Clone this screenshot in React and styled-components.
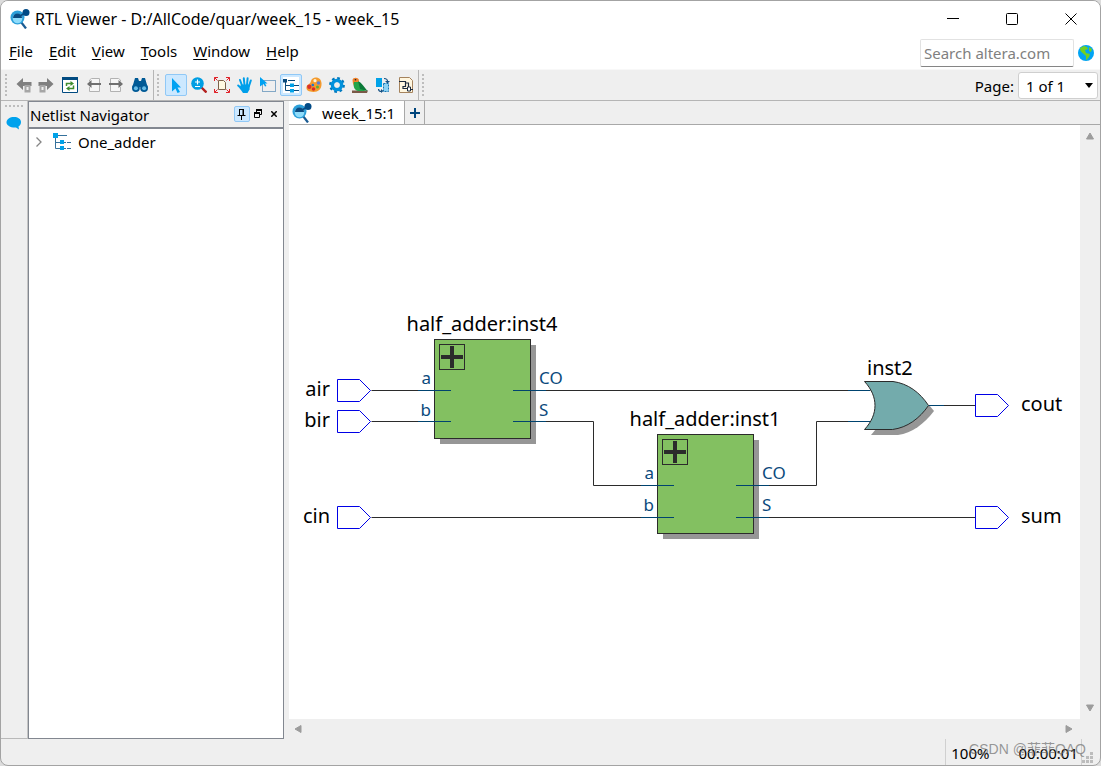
import styled, { createGlobalStyle } from "styled-components";

const GlobalStyle = createGlobalStyle`
  * {
    box-sizing: border-box;
  }

  body {
    margin: 0;
    background: #dcdcdc;
    color: #000;
    font-family: "Noto Sans", "Noto Sans CJK SC", sans-serif;
    font-size: 15px;
    line-height: 20px;
  }

  button, input, select {
    font: inherit;
    color: inherit;
  }
`;

const Magnifier = () => (
  <svg width="20" height="20" viewBox="0 0 20 20">
    <path d="M11 13l5 6.5" stroke="#1b5c93" strokeWidth="2.2" />
    <circle cx="7.5" cy="8.5" r="7" fill="#2c9fd9" />
    <circle cx="7.5" cy="9.5" r="4.8" fill="#8fdcfb" />
    <path d="M3 9a4.5 4.5 0 0 1 9 0z" fill="#0b4a80" />
    <path d="M10 7l5-3" stroke="#0b4a80" strokeWidth="1.5" />
    <circle cx="16" cy="3.5" r="3.5" fill="#004a86" />
  </svg>
);

const Arrow = ({ flip }) => (
  <svg width="16" height="16" viewBox="0 0 16 16">
    <g transform={flip ? "matrix(-1 0 0 1 16 0)" : undefined}>
      <path d="M0.5 7L7 1v4h8.5v4H7v4z" fill="#7f7f7f" />
      <path d="M8.5 8h6v7.500h-6z" fill="#a6a6a6" />
      <path d="M10.500 10h2v3h-2z" fill="#efefef" />
    </g>
  </svg>
);

const PageArrow = ({ flip }) => (
  <svg width="16" height="16" viewBox="0 0 16 16">
    <g transform={flip ? "matrix(-1 0 0 1 16 0)" : undefined}>
      <path d="M3.5 4.500V3l2-1.500h8v13h-10V10" fill="#f6f6f6" stroke="#b2b2b2" />
      <path d="M1 7L5.500 3v3H15v2H5.500v3z" fill="#707070" />
    </g>
  </svg>
);

const Refresh = () => (
  <svg width="16" height="16" viewBox="0 0 16 16">
    <path d="M0.5 0.5h15v15H0.5z" fill="#fff" stroke="#004a80" />
    <path d="M0 0h16v3H0z" fill="#004a80" />
    <path d="M4.5 9V6.5H9M11.5 8.500v3H7" fill="none" stroke="#3f8d2f" strokeWidth="1.5" />
    <path d="M8.5 4l3.500 2.500L8.5 9zM7.5 9L4 11.500 7.5 14z" fill="#3f8d2f" />
  </svg>
);

const Binoculars = () => (
  <svg width="16" height="16" viewBox="0 0 16 16">
    <path d="M3 1h3l1 3h2l1-3h3l2.600 9H.4z" fill="#005a96" />
    <circle cx="3.9" cy="11" r="3.9" fill="#005a96" />
    <circle cx="12.1" cy="11" r="3.9" fill="#005a96" />
    <circle cx="3.9" cy="11.2" r="2" fill="#67bde8" />
    <circle cx="12.1" cy="11.2" r="2" fill="#67bde8" />
  </svg>
);

const Pointer = () => (
  <svg width="16" height="16" viewBox="0 0 16 16">
    <path d="M4 1l9 9.500H9.500L12 15l-2.500 1L7.500 11.500 4 14.500z" fill="#00a2f2" />
  </svg>
);

const Zoom = () => (
  <svg width="16" height="16" viewBox="0 0 16 16">
    <path d="M10 10l5.500 5.500" stroke="#b3211f" strokeWidth="2.4" />
    <circle cx="6.5" cy="6.5" r="6.3" fill="#009ee3" />
    <path d="M6.5 2.5v5M4 5h5M4 9.5h5" stroke="#fff" strokeWidth="1.2" />
  </svg>
);

const FitPage = () => (
  <svg width="16" height="16" viewBox="0 0 16 16">
    <path d="M4.500 3.500h5l2 2v7h-7z" fill="#fff8e2" stroke="#7b604a" />
    <path
      d="M.5 4V.5H4M12 .5h3.500V4M.5 12v3.500H4M12 15.500h3.500V12M.5.5l3 3M15.500.5l-3 3M.5 15.500l3-3M15.500 15.500l-3-3"
      fill="none"
      stroke="#e02229"
    />
  </svg>
);

const Hand = () => (
  <svg width="16" height="16" viewBox="0 0 16 16">
    <path
      d="M5.200 9L3 3M7.500 8L6.800 1.300M10 8l.6-6.700M12 9l1.800-5.500M5 12L1.200 8.500"
      stroke="#009fea"
      strokeWidth="2"
      strokeLinecap="round"
    />
    <path d="M4 7.500h9l-.5 5-2 3.500H6l-3.500-5z" fill="#009fea" />
  </svg>
);

const AreaSelect = () => (
  <svg width="16" height="16" viewBox="0 0 16 16">
    <path d="M2.5 3.5h13v11h-13z" fill="none" stroke="#17609d" strokeDasharray="1 1" />
    <path d="M0 0l7.500 6.500H5L6.500 9 5 9.500 3.500 7 0 9.500z" fill="#00a2f2" />
  </svg>
);

const Tree = ({ size = 18 }) => (
  <svg width={size} height={size} viewBox="0 0 18 18">
    <path d="M2.5 3v12.500H8M3 9.5h5M5 2.5h9M11 9.5h2M14 9.5h4M11 15.500h2M14 15.500h4" fill="none" stroke="#35719c" />
    <path d="M0 0h5v5H0zM7 7h4v4H7zM7 13h4v4H7z" fill="#00a2e8" />
  </svg>
);

const NetlistTree = () => (
  <svg width="18" height="18" viewBox="0 0 18 18">
    <path d="M1 1h16v16H1z" fill="#fff" />
    <path d="M3.5 4v10.500H8M4 9.5h4M6 4.500h7M11 9.5h6M11 14.500h6" fill="none" stroke="#0b4a7c" />
    <path d="M1 3h4v3.500H1z" fill="#0b4a7c" />
    <path d="M8 7.500h4V11H8zM8 13h4v3.500H8z" fill="#00a2e8" />
  </svg>
);

const Palette = () => (
  <svg width="16" height="16" viewBox="0 0 16 16">
    <path d="M5 4c1-5 10-5 10.500 2 .5 6-3 9-8 9C2 15 0 13 .5 10 1 7 4 8 5 4z" fill="#f49a2c" />
    <circle cx="9" cy="3.700" r="1.600" fill="#fff3d8" />
    <circle cx="12.500" cy="6" r="1.700" fill="#5a7fd6" />
    <circle cx="11.500" cy="10" r="1.500" fill="#5cae3b" />
    <circle cx="7.500" cy="12" r="1.800" fill="#d92b2b" />
    <circle cx="3.300" cy="9.700" r="2.200" fill="#d9302b" />
    <circle cx="6.800" cy="8" r="1.300" fill="#1b77cf" />
  </svg>
);

const Gear = () => (
  <svg width="16" height="16" viewBox="0 0 16 16">
    <circle cx="8" cy="8" r="6.6" fill="none" stroke="#0078bd" strokeWidth="2.6" strokeDasharray="2.6 2.584" />
    <circle cx="8" cy="8" r="4.5" fill="none" stroke="#0091dc" strokeWidth="3.6" />
    <circle cx="8" cy="8" r="2.6" fill="#efefef" />
  </svg>
);

const Bird = () => (
  <svg width="16" height="16" viewBox="0 0 16 16">
    <path d="M0 13.500h16l-1 2.500H0z" fill="#7a5a48" />
    <path d="M.5 3C1 0 6 0 7 3l-1 4-4 2C1 7 .5 5 .5 3z" fill="#f0822b" />
    <path d="M2 5c-1 4 0 8 4 9h7L7.500 5z" fill="#22a54a" />
    <path d="M6 4c4 2 6 6 9.500 10L8 12z" fill="#0b7a38" />
    <circle cx="3.500" cy="2.700" r=".8" fill="#123" />
  </svg>
);

const Swap = () => (
  <svg width="16" height="16" viewBox="0 0 16 16">
    <path d="M1 1h6v9H1z" fill="#00a2e8" />
    <path d="M8.500 6.500h5v8h-5z" fill="#8cd2f4" stroke="#1377b5" strokeDasharray="2 1" />
    <path d="M9 1.500c2.500 0 3.500 1 3.500 3M3.500 12c0 1.500 1 2.500 3 2.500" fill="none" stroke="#155184" strokeWidth="1.2" />
    <path d="M10 4h5l-2.500 2.500zM6 12l2.500 2L6 16z" fill="#155184" />
  </svg>
);

const Netlist = () => (
  <svg width="16" height="16" viewBox="0 0 16 16">
    <path d="M1.5.5h10l3 3v12h-13z" fill="#fff6df" stroke="#a5835d" />
    <path d="M1 4.500h6.500v5H5v2h5M7.500 6h3v6M12 12.500h3" fill="none" stroke="#1c2a3c" strokeWidth="1.2" />
    <path d="M9.500 10h3v4h-3z" fill="#fff" stroke="#1c2a3c" />
  </svg>
);

const Globe = () => (
  <svg width="16" height="16" viewBox="0 0 16 16">
    <circle cx="8" cy="8" r="8" fill="#00a4f4" />
    <path d="M2 3l4-2 3 1 1 2-3 1 1 3 4 1-1 3-3 3.500L8 11 4.500 8l-2-2z" fill="#72cf22" />
    <path d="M11 2l3 2-1 3-2-1z" fill="#72cf22" />
  </svg>
);

const Pin = () => (
  <svg width="10" height="12" viewBox="0 0 10 12">
    <path d="M2.5 1v6M2 1.5h4M.5 7.5h8M4.5 8v4" fill="none" stroke="#000" />
    <path d="M5.500 1h1.500v6H5.500z" />
  </svg>
);

const Restore = () => (
  <svg width="10" height="10" viewBox="0 0 10 10">
    <path d="M3.5 3V1.5h5v4H7M1.5 4.5h5v4h-5z" fill="none" stroke="#000" />
    <path d="M3 0h6v2H3zM1 3h6v2H1z" />
  </svg>
);

const Cross = ({ size, weight }) => (
  <svg width={size} height={size} viewBox="0 0 12 12">
    <path d="M0.5 0.5l11 11M11.5 0.5l-11 11" stroke="#000" strokeWidth={weight} />
  </svg>
);

const Triangle = ({ turn = 0 }) => (
  <svg width="10" height="10" viewBox="0 0 10 10">
    <path d="M5 2l3.500 6h-7z" fill="#9c9c9c" stroke="#9c9c9c" strokeLinejoin="round" transform={`rotate(${turn} 5 5)`} />
  </svg>
);

const MENUS = ["File", "Edit", "View", "Tools", "Window", "Help"];

const FILE_TOOLS = [
  { label: "Back", icon: <Arrow /> },
  { label: "Forward", icon: <Arrow flip /> },
  { label: "Refresh", icon: <Refresh />, wide: true },
  { label: "Previous page", icon: <PageArrow /> },
  { label: "Next page", icon: <PageArrow flip /> },
  { label: "Find", icon: <Binoculars />, wide: true },
];

const VIEW_TOOLS = [
  { label: "Selection tool", icon: <Pointer />, active: true },
  { label: "Zoom tool", icon: <Zoom /> },
  { label: "Fit in window", icon: <FitPage /> },
  { label: "Hand tool", icon: <Hand /> },
  { label: "Area selection", icon: <AreaSelect /> },
  { label: "Netlist navigator", icon: <NetlistTree />, active: true },
  { label: "Color settings", icon: <Palette /> },
  { label: "Options", icon: <Gear /> },
  { label: "Bird's eye view", icon: <Bird /> },
  { label: "Swap view", icon: <Swap /> },
  { label: "Export netlist", icon: <Netlist /> },
];

const PINS = [
  { name: "air", x: 48, y: 265, input: true },
  { name: "bir", x: 48, y: 296, input: true },
  { name: "cin", x: 48, y: 392, input: true },
  { name: "cout", x: 686, y: 280 },
  { name: "sum", x: 686, y: 392 },
];

const BLOCKS = [
  { name: "half_adder:inst4", x: 145, y: 214, ports: [51, 82] },
  { name: "half_adder:inst1", x: 368, y: 309, ports: [51, 83] },
];

const WIRES = [
  "M82 265H145",
  "M82 296H145",
  "M82 392H368",
  "M242 265H581",
  "M242 296H304V360H368",
  "M465 360H527V296H581",
  "M465 392H686",
  "M639 280H686",
];

const Block = ({ name, x, y, ports }) => (
  <g transform={`translate(${x} ${y})`}>
    <InstanceName x="48" y="-8" textAnchor="middle">{name}</InstanceName>
    <rect x="6" y="6" width="96" height="99" fill="#969696" />
    <rect x="0.5" y="0.5" width="96" height="99" fill="#83c061" stroke="#2b2b2b" />
    <rect x="5.5" y="5.5" width="25" height="25" fill="none" stroke="#2b2b2b" />
    <path d="M18 7v22M7 18h22" stroke="#2b2b2b" strokeWidth="4" />
    {ports.map((py, i) => (
      <g key={py}>
        <path d={`M-16 ${py}.5H17M79 ${py}.5H112`} stroke="#00436f" />
        <PortName x="-3" y={45 + i * 32} textAnchor="end">{i ? "b" : "a"}</PortName>
        <PortName x="105" y={45 + i * 32}>{i ? "S" : "CO"}</PortName>
      </g>
    ))}
  </g>
);

const Schematic = () => (
  <Drawing width="791" height="594" viewBox="0 0 791 594" role="img" aria-label="One_adder schematic">
    <g transform="translate(0.5 0.5)" fill="none" stroke="#2b2b2b">
      {WIRES.map((d) => <path key={d} d={d} />)}
    </g>
    {BLOCKS.map((block) => <Block key={block.name} {...block} />)}
    <path d="M587 304l-5 6h27c14-2 26-11 36-24l-5-6z" fill="#969696" />
    <path d="M575.5 256.5H604c15 2 27 11 35.500 24-9 13-21 22-36 24h-28c14-15 14-33 0-48z" fill="#73abac" stroke="#2b2b2b" />
    <path d="M559 265.5h22M559 296.5h22M640 280.5h15" stroke="#00436f" />
    <InstanceName x="578" y="250">inst2</InstanceName>
    {PINS.map(({ name, x, y, input }) => (
      <g key={name}>
        <path d={`M${x}.5 ${y - 10.5}h22l11 11-11 11h-22z`} fill="#fff" stroke="#0000e6" />
        <InstanceName x={input ? x - 7 : x + 46} y={y + 6} textAnchor={input ? "end" : "start"}>
          {name}
        </InstanceName>
      </g>
    ))}
  </Drawing>
);

const App = () => {
  return (
    <Window>
      <GlobalStyle />
      <TitleBar>
        <Magnifier />
        <Title>RTL Viewer - D:/AllCode/quar/week_15 - week_15</Title>
        <CaptionButton aria-label="Minimize">
          <svg width="12" height="12"><path d="M0 5.5h12" stroke="#000" /></svg>
        </CaptionButton>
        <CaptionButton aria-label="Maximize">
          <svg width="12" height="12"><rect x=".5" y=".5" width="11" height="11" rx="1" fill="none" stroke="#000" /></svg>
        </CaptionButton>
        <CaptionButton aria-label="Close"><Cross size={12} weight={1} /></CaptionButton>
      </TitleBar>
      <MenuBar>
        <Menus>
          {MENUS.map((menu) => (
            <MenuButton key={menu}><u>{menu[0]}</u>{menu.slice(1)}</MenuButton>
          ))}
        </Menus>
        <SearchInput type="search" placeholder="Search altera.com" aria-label="Search altera.com" />
        <PlainButton aria-label="Open altera.com"><Globe /></PlainButton>
      </MenuBar>
      <ToolBar>
        <Grip />
        <ToolGroup>
          {FILE_TOOLS.map(({ label, icon, wide }) => (
            <ToolButton key={label} aria-label={label} $width={wide ? 25 : 21}>{icon}</ToolButton>
          ))}
        </ToolGroup>
        <Divider />
        <Grip />
        <ToolGroup>
          {VIEW_TOOLS.map(({ label, icon, active }) => (
            <ToolButton key={label} aria-label={label} $width={22} $active={active}>{icon}</ToolButton>
          ))}
        </ToolGroup>
        <Divider />
        <Grip />
        <PageLabel htmlFor="page">Page:</PageLabel>
        <SelectBox>
          <PageSelect id="page"><option>1 of 1</option></PageSelect>
          <svg width="8" height="5"><path d="M0 0h8L4 5z" /></svg>
        </SelectBox>
      </ToolBar>
      <Body>
        <SideStrip>
          <StripGrip />
          <PlainButton aria-label="Messages">
            <svg width="16" height="14" viewBox="0 0 16 14">
              <path d="M8 1c4 0 7 2 7 5 0 2-1 3.500-2.500 4.500l.5 3-3-2C5 12 .5 9.500.5 6.500.5 3 4 1 8 1z" fill="#00a2ed" />
            </svg>
          </PlainButton>
        </SideStrip>
        <Navigator>
          <NavigatorHeader>
            <NavigatorTitle>Netlist Navigator</NavigatorTitle>
            <DockButton aria-label="Pin" $active><Pin /></DockButton>
            <DockButton aria-label="Float"><Restore /></DockButton>
            <DockButton aria-label="Close panel"><Cross size={6} weight={3} /></DockButton>
          </NavigatorHeader>
          <TreeRow>
            <svg width="8" height="12"><path d="M1.5 1.5L6 6l-4.500 4.500" fill="none" stroke="#858585" strokeWidth="1.3" /></svg>
            <Tree />
            <span>One_adder</span>
          </TreeRow>
        </Navigator>
        <Viewer>
          <Tabs>
            <Tab><Magnifier />week_15:1</Tab>
            <NewTab aria-label="New tab">
              <svg width="10" height="10"><path d="M5 0v10M0 5h10" stroke="#00457c" strokeWidth="2" /></svg>
            </NewTab>
          </Tabs>
          <Stage>
            <Canvas><Schematic /></Canvas>
            <ScrollTrack $vertical><Triangle /><Triangle turn={180} /></ScrollTrack>
            <ScrollTrack><Triangle turn={270} /><Triangle turn={90} /></ScrollTrack>
          </Stage>
        </Viewer>
      </Body>
      <StatusBar>
        <Status>100%</Status>
        <Status>00:00:01</Status>
        <SizeGrip width="12" height="12" viewBox="0 0 12 12">
          <path d="M8 0h3v3H8zM4 4h3v3H4zM8 4h3v3H8zM0 8h3v3H0zM4 8h3v3H4zM8 8h3v3H8z" fill="#bcbcbc" />
        </SizeGrip>
        <Watermark>CSDN @菲菲QAQ</Watermark>
      </StatusBar>
    </Window>
  );
};

const Window = styled.div`
  display: flex;
  flex-direction: column;
  min-height: 100vh;
  border: 1px solid #a3a3a3;
  border-radius: 8px;
  background: #efefef;
  overflow: hidden;
`;

const PlainButton = styled.button`
  display: flex;
  align-items: center;
  justify-content: center;
  padding: 0;
  border: 0;
  background: none;
`;

const TitleBar = styled.header`
  display: flex;
  align-items: center;
  height: 36px;
  padding-left: 9px;
  background: #fff;
`;

const Title = styled.h1`
  flex: 1;
  margin: 0;
  padding-left: 5px;
  font-size: 16px;
  font-weight: 400;
`;

const CaptionButton = styled(PlainButton)`
  width: 59px;
  height: 36px;
`;

const MenuBar = styled.div`
  display: flex;
  align-items: center;
  gap: 4px;
  height: 32px;
  padding-right: 6px;
  background: #fff;
`;

const Menus = styled.nav`
  display: flex;
  flex: 1;
  align-self: flex-start;
`;

const MenuButton = styled(PlainButton)`
  display: block;
  height: 28px;
  padding: 0 8px;

  u {
    text-underline-offset: 2px;
  }
`;

const SearchInput = styled.input`
  width: 154px;
  height: 28px;
  padding: 0 3px;
  border: 1px solid #e2e2e2;
  border-bottom-color: #858585;
  border-radius: 2px;
  background: #fff;

  &::placeholder {
    color: #808080;
    opacity: 1;
  }
`;

const ToolBar = styled.div`
  display: flex;
  align-items: center;
  height: 32px;
  padding: 0 2px 0 4px;
  border-top: 1px solid #f8f8f8;
  border-bottom: 1px solid #b5b5b5;
`;

const Grip = styled.span`
  width: 2px;
  height: 22px;
  background: repeating-linear-gradient(#bdbdbd 0 2px, transparent 2px 4px);
`;

const ToolGroup = styled.div`
  display: flex;
  gap: 1px;
  padding: 0 1px 0 6px;
`;

const ToolButton = styled(PlainButton)`
  width: ${({ $width }) => $width}px;
  height: 22px;
  border: 1px solid ${({ $active }) => ($active ? "#90c8f6" : "transparent")};
  border-radius: 2px;
  background: ${({ $active }) => ($active ? "#cce8ff" : "transparent")};

  svg {
    flex-shrink: 0;
  }
`;

const Divider = styled.span`
  width: 1px;
  height: 30px;
  margin-right: 3px;
  background: #b5b5b5;
`;

const PageLabel = styled.label`
  margin-left: auto;
  padding: 2px 4px 0 0;
`;

const SelectBox = styled.div`
  display: grid;
  align-items: center;
  width: 80px;

  > * {
    grid-area: 1 / 1;
  }

  svg {
    justify-self: end;
    margin-right: 5px;
    pointer-events: none;
  }
`;

const PageSelect = styled.select`
  width: 100%;
  height: 27px;
  padding: 2px 7px 0;
  appearance: none;
  border: 1px solid #cfcfcf;
  border-radius: 3px;
  background: #fff;
`;

const Body = styled.main`
  display: flex;
  flex: 1;
`;

const SideStrip = styled.aside`
  display: flex;
  flex-direction: column;
  align-items: center;
  gap: 9px;
  width: 27px;
  padding-top: 4px;
  border-right: 1px solid #c4c4c4;
  border-bottom: 1px solid #b9b9b9;
`;

const StripGrip = styled.span`
  width: 18px;
  height: 2px;
  background: repeating-linear-gradient(90deg, #bdbdbd 0 2px, transparent 2px 4px);
`;

const Navigator = styled.section`
  width: 256px;
  margin-right: 5px;
  border: 1px solid #828790;
  background: #fff;
`;

const NavigatorHeader = styled.div`
  display: flex;
  align-items: center;
  height: 27px;
  padding: 0 1px 2px;
  border-bottom: 2px solid #828790;
  background: #efefef;
`;

const NavigatorTitle = styled.h2`
  flex: 1;
  margin: 0;
  padding-top: 3px;
  font-size: 15px;
  font-weight: 400;
`;

const DockButton = styled(PlainButton)`
  width: 16px;
  height: 16px;
  border: 1px solid ${({ $active }) => ($active ? "#90c8f6" : "transparent")};
  border-radius: 2px;
  background: ${({ $active }) => ($active ? "#cce8ff" : "transparent")};
`;

const TreeRow = styled.div`
  display: flex;
  align-items: center;
  height: 26px;
  padding-left: 6px;

  svg + svg {
    margin: 0 7px 0 10px;
  }
`;

const Viewer = styled.section`
  display: flex;
  flex: 1;
  flex-direction: column;
  min-width: 0;
`;

const Tabs = styled.div`
  display: flex;
  height: 24px;
  border-bottom: 1px solid #a8a8a8;
`;

const Tab = styled(PlainButton)`
  gap: 10px;
  height: 23px;
  padding: 0 9px 0 3px;
  border-right: 1px solid #a8a8a8;
  background: #fff;
`;

const NewTab = styled(PlainButton)`
  width: 20px;
  height: 23px;
  border: 1px solid #a8a8a8;
  border-width: 0 1px 0 0;
`;

const Stage = styled.div`
  display: grid;
  flex: 1;
  grid-template-columns: 1fr 20px;
  grid-template-rows: 1fr 20px;
`;

const Canvas = styled.div`
  min-width: 0;
  overflow: hidden;
  background: #fff;
`;

const Drawing = styled.svg`
  display: block;
`;

const InstanceName = styled.text`
  font-size: 20px;
`;

const PortName = styled.text`
  font-size: 17px;
  fill: #0b4a7c;
`;

const ScrollTrack = styled.div`
  display: flex;
  flex-direction: ${({ $vertical }) => ($vertical ? "column" : "row")};
  align-items: center;
  justify-content: space-between;
  padding: ${({ $vertical }) => ($vertical ? "6px 0" : "0 6px 0 4px")};
`;

const StatusBar = styled.footer`
  position: relative;
  display: flex;
  justify-content: flex-end;
  height: 26px;
  padding-right: 6px;
`;

const Status = styled.span`
  padding: 4px 0 0 5px;
  margin-right: 24px;
  border-left: 1px solid #d0d0d0;

  & + & {
    margin-right: 0;
    padding-right: 3px;
    border-left: 0;
    border-right: 1px solid #d0d0d0;
  }
`;

const SizeGrip = styled.svg`
  align-self: flex-end;
  margin-bottom: 1px;
`;

const Watermark = styled.span`
  position: absolute;
  right: 14px;
  top: 0;
  color: rgba(110, 110, 110, 0.7);
  font-family: "Liberation Sans", "Noto Sans CJK SC", sans-serif;
  font-size: 14px;
`;

export default App;
